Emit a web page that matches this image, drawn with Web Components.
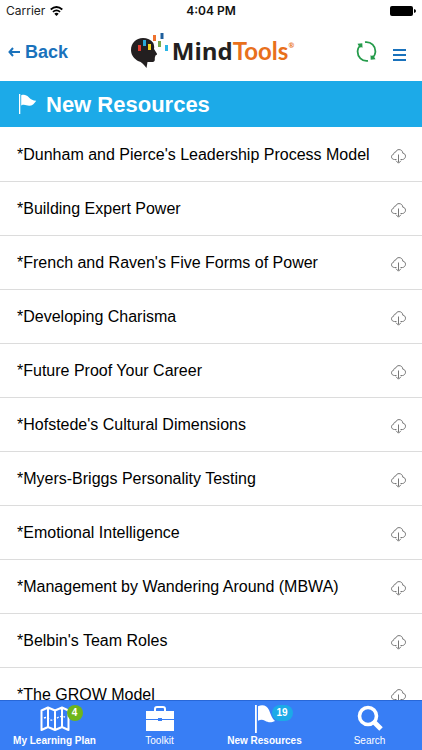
<!DOCTYPE html>
<html lang="en">
<head>
<meta charset="utf-8">
<meta name="viewport" content="width=device-width, initial-scale=1">
<title>New Resources</title>
<style>
  body { margin: 0; background: #fff; font-family: "Liberation Sans", Arial, sans-serif; }
</style>
</head>
<body>
<resource-app></resource-app>

<script>
const ICONS = {
  flag: `<svg viewBox="0 0 20 28"><path fill="currentColor" d="M0 0h1.800v28H0zM3 1.200C8-.8 12 .6 14 5c2 5 3 8.500 6 11-4 2-7 1.500-10-.2-2.500-1.300-4.500-1.200-7 0z"/></svg>`,
  pennant: `<svg viewBox="0 0 18 20"><path fill="currentColor" d="M0 0h1.300v20H0zM2.200 1.300c3-1.200 5.300-.2 7.300 1.800 2.500 2.600 4.500 3.600 7.700 3.600-2 3-4 5-7 5-3 0-4.500-1.700-8-.3z"/></svg>`,
  map: `<svg viewBox="0 0 30 26" fill="none" stroke="currentColor" stroke-width="2" stroke-linejoin="round"><path d="M1.500 4.500 8 1.500l7 3 7-3 6.500 3V24L22 21l-7 3-7-3-6.500 3zM8 1.500V21M15 4.500V24M22 1.500V21"/><path stroke-width="1.400" stroke-dasharray="2 1.500" d="M4 12c4-2 5 3 9 2s6-5 12-3"/></svg>`,
  briefcase: `<svg viewBox="0 0 30 26"><path fill="none" stroke="currentColor" stroke-width="2" d="M10 6V3q0-2 2-2h6q2 0 2 2v3"/><path fill="currentColor" d="M1 5h28v8H17v-1h-4v1H1zM1 14h12v1h4v-1h12v11H1z"/></svg>`,
  search: `<svg viewBox="0 0 26 26" fill="none" stroke="currentColor"><circle cx="11" cy="11" r="8.500" stroke-width="3.600"/><path stroke-width="5" d="m17 17 7 7"/></svg>`
};

function mount(host, html) {
  const template = document.createElement('template');
  template.innerHTML = html;
  const root = host.attachShadow({ mode: 'open' });
  root.appendChild(template.content.cloneNode(true));
  return root;
}

class StatusBar extends HTMLElement {
  constructor() {
    super();
    mount(this, `
      <style>
        :host {
          display: grid; grid-template-columns: 1fr auto 1fr; align-items: center;
          height: 22px; padding: 0 6px; font: 12px/22px Inter, sans-serif; color: #222;
        }
        .carrier { display: flex; align-items: center; gap: 5px; }
        .time { font-weight: 600; color: #111; }
        .battery { justify-self: end; }
        svg { display: block; }
      </style>
      <span class="carrier">Carrier
        <svg width="13" height="10" viewBox="0 0 13 10" fill="none" stroke="#000" stroke-width="1.700">
          <path d="M.7 3.500q5.800-5 11.600 0M2.900 5.900q3.600-3.100 7.200 0"/>
          <path fill="#000" stroke="none" d="M4.300 7.700q2.200-1.700 4.400 0L6.500 10z"/>
        </svg>
      </span>
      <span class="time">4:04 PM</span>
      <svg class="battery" width="26" height="10" viewBox="0 0 26 10">
        <rect width="23" height="10" rx="2"/><path d="M24 3q2 .3 2 2t-2 2z"/>
      </svg>
    `);
  }
}
customElements.define('status-bar', StatusBar);

class BrandLogo extends HTMLElement {
  constructor() {
    super();
    mount(this, `
      <style>
        :host { display: flex; align-items: center; gap: 3px; padding-left: 3px; color: #231f20; }
        svg { display: block; }
        .name { font: 700 24px/36px "Open Sans", sans-serif; white-space: nowrap; }
        .tools { color: #e8701c; font-family: Lato, sans-serif; }
        sup { font-size: 7px; line-height: 1; vertical-align: 12px; }
      </style>
      <svg width="38" height="38" viewBox="0 0 38 38">
        <path fill="#231f20" d="M12 6C5 6 0 11 0 18c0 6 4 9 7 11 4 1 6 4 8.500 7l1-6c3 0 6 .5 7-1 .8-1.500-.2-3 .7-4.500 0-1.500 2.300-1.500 1.800-2.700L23 17c.5-2 0-4-.7-6C20 7.500 16 6 12 6z"/>
        <path fill="#e23b30" d="M7 13h3v6H7z"/>
        <path fill="#29a9d8" d="M12 8h3v6h-3z"/>
        <path fill="#f6d51f" d="M17 12h3v6h-3z"/>
        <path fill="#ee722e" d="M22 3h3v6h-3z"/>
        <path fill="#1f5f9d" d="M29.500 1h3v6h-3z"/>
        <path fill="#79a94a" d="M27 9h3v6h-3z"/>
        <path fill="#29b6e6" d="M34 13h3v6h-3z"/>
      </svg>
      <span class="name">Mind<span class="tools">Tools<sup>®</sup></span></span>
    `);
  }
}
customElements.define('brand-logo', BrandLogo);

class NavHeader extends HTMLElement {
  constructor() {
    super();
    mount(this, `
      <style>
        :host {
          display: grid; grid-template-columns: 1fr auto 1fr; align-items: center; box-sizing: border-box;
          height: 58px; padding: 0 8px; color: #1a72bc;
        }
        a { display: flex; align-items: center; gap: 5px; padding-top: 2px; font-weight: bold; font-size: 18px; color: inherit; text-decoration: none; }
        .actions { display: flex; justify-content: flex-end; align-items: center; gap: 16px; padding-right: 8px; }
        button { padding: 0; border: 0; background: none; color: inherit; }
        svg { display: block; }
        .menu { padding-top: 8px; }
      </style>
      <a href="#back">
        <svg width="12" height="10" viewBox="0 0 12 10" fill="none" stroke="currentColor" stroke-width="2"><path d="M12 5H1.500M5 1 1.500 5 5 9"/></svg>
        Back
      </a>
      <brand-logo></brand-logo>
      <div class="actions">
        <button aria-label="Refresh">
          <svg width="21" height="21" viewBox="0 0 21 21" fill="none" stroke="#259b4b" stroke-width="1.800">
            <path d="M9 1.200c6-.9 11 4 10.300 10.300-.2 1.700-.9 3.300-2 4.500M12 19.800C6 20.700 1 15.800 1.700 9.500 1.900 7.800 2.600 6.200 3.700 5"/>
            <path fill="#259b4b" stroke="none" d="m1.500 2.800 4.800-.6.2 4.600-1.700-.8-.8 1zM19.500 18.200l-4.800.6-.2-4.600 1.700.8.800-1z"/>
          </svg>
        </button>
        <button class="menu" aria-label="Menu">
          <svg width="13" height="12" viewBox="0 0 13 12"><path fill="currentColor" d="M0 0h13v2H0zM0 5h13v2H0zM0 10h13v2H0z"/></svg>
        </button>
      </div>
    `);
  }
}
customElements.define('nav-header', NavHeader);

class PageTitle extends HTMLElement {
  constructor() {
    super();
    mount(this, `
      <style>
        :host { display: flex; align-items: center; gap: 9px; height: 46px; padding: 0 19px; margin: 1px 0; background: #1caae8; color: #fff; }
        svg { display: block; width: 18px; height: 20px; }
        h1 { margin: 0; padding-top: 2px; font-size: 22px; line-height: 28px; }
      </style>
      ${ICONS.pennant}
      <h1><slot></slot></h1>
    `);
  }
}
customElements.define('page-title', PageTitle);

class ResourceRow extends HTMLElement {
  constructor() {
    super();
    mount(this, `
      <style>
        :host {
          display: flex; align-items: center; justify-content: space-between; box-sizing: border-box;
          height: 54px; padding: 0 16px 0 17px; border-bottom: 1px solid #dcdcdc; color: #000;
        }
        a { font-size: 16px; line-height: 24px; white-space: nowrap; color: inherit; text-decoration: none; }
        button { padding: 4px 0 0; border: 0; background: none; }
        svg { display: block; }
      </style>
      <a href="#resource"><slot></slot></a>
      <button aria-label="Download">
        <svg width="15" height="15" viewBox="0 0 15 15" fill="none" stroke="#777">
          <path d="M5.500 10.500H3.500C1.800 10.500.5 9.400.5 7.800c0-1.400.9-2.300 2.200-2.600C2.700 3.800 3.500 3 4.700 3.100 5.300 1.400 6.400.6 8 .6c2.200 0 3.700 1.400 3.800 3.600 1.700.2 2.700 1.400 2.700 3s-1.300 3.300-3 3.300h-2M7.500 5.500v8M5 11.700l2.500 2.500 2.500-2.500"/>
        </svg>
      </button>
    `);
  }
}
customElements.define('resource-row', ResourceRow);

class TabItem extends HTMLElement {
  connectedCallback() {
    if (this.shadowRoot) return;
    const badge = this.getAttribute('badge');
    mount(this, `
      <style>
        :host { display: block; flex: 1 1 0; }
        a { display: flex; flex-direction: column; align-items: center; color: #fff; text-decoration: none; font-size: 10px; line-height: 12px; white-space: nowrap; }
        :host([active]) a { font-weight: bold; }
        .icon { position: relative; display: flex; justify-content: center; height: 28px; margin: 4px 0 2px; }
        .icon svg { display: block; width: 30px; height: 26px; }
        :host([icon="flag"]) .icon svg { width: 20px; height: 28px; }
        :host([icon="map"]) .icon svg, :host([icon="briefcase"]) .icon svg { margin-top: 1px; }
        .badge {
          position: absolute; left: 100%; top: 0; margin-left: -3px; box-sizing: border-box;
          min-width: 16px; height: 16px; padding: 0 5px; border-radius: 8px;
          background: var(--badge, #6fb51b); font-weight: bold; font-size: 10px; line-height: 16px; text-align: center;
        }
      </style>
      <a href="#tab">
        <span class="icon">${ICONS[this.getAttribute('icon')]}${badge ? `<span class="badge">${badge}</span>` : ''}</span>
        <span><slot></slot></span>
      </a>
    `);
  }
}
customElements.define('tab-item', TabItem);

class TabBar extends HTMLElement {
  constructor() {
    super();
    mount(this, `
      <style>
        :host { display: block; }
        nav { display: flex; box-sizing: border-box; height: 50px; padding: 0 0 3px 2px; border-top: 1px solid #2867d8; background: #387ef5; }
      </style>
      <nav><slot></slot></nav>
    `);
  }
}
customElements.define('tab-bar', TabBar);

class ResourceApp extends HTMLElement {
  #resources = [
    "Dunham and Pierce's Leadership Process Model",
    'Building Expert Power',
    "French and Raven's Five Forms of Power",
    'Developing Charisma',
    'Future Proof Your Career',
    "Hofstede's Cultural Dimensions",
    'Myers-Briggs Personality Testing',
    'Emotional Intelligence',
    'Management by Wandering Around (MBWA)',
    "Belbin's Team Roles",
    'The GROW Model'
  ];

  constructor() {
    super();
    mount(this, `
      <style>
        :host { display: flex; flex-direction: column; height: 100vh; overflow: hidden; }
        status-bar, nav-header, page-title, tab-bar { flex: none; }
        main { flex: 1 1 0; min-height: 0; overflow: hidden; }
        .new { --badge: #1caae8; }
      </style>
      <status-bar></status-bar>
      <nav-header></nav-header>
      <page-title>New Resources</page-title>
      <main>${this.#resources.map((name) => `<resource-row>*${name}</resource-row>`).join('')}</main>
      <tab-bar>
        <tab-item icon="map" badge="4" active>My Learning Plan</tab-item>
        <tab-item icon="briefcase">Toolkit</tab-item>
        <tab-item class="new" icon="flag" badge="19" active>New Resources</tab-item>
        <tab-item icon="search">Search</tab-item>
      </tab-bar>
    `);
  }
}
customElements.define('resource-app', ResourceApp);
</script>
</body>
</html>
